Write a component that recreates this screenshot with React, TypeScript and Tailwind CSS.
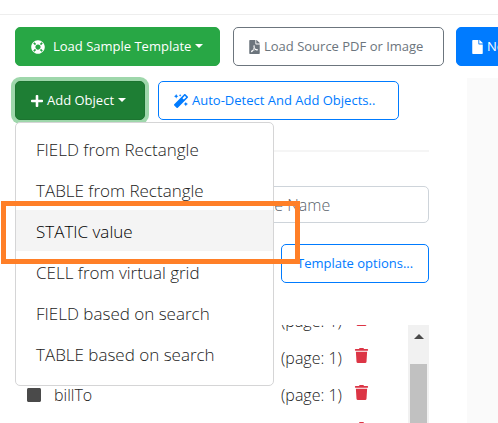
import type { ReactNode } from "react";
import { FaFile, FaFilePdf, FaLifeRing, FaMagic, FaPlus, FaSquare, FaTrash } from "react-icons/fa";
import clsx from "clsx";

const MENU_ITEMS = [
  "FIELD from Rectangle",
  "TABLE from Rectangle",
  "STATIC value",
  "CELL from virtual grid",
  "FIELD based on search",
  "TABLE based on search",
];

const OBJECTS = [
  { id: 1, name: "", page: 1 },
  { id: 2, name: "", page: 1 },
  { id: 3, name: "billTo", page: 1 },
  { id: 4, name: "", page: 1 },
];

function Button({ className, children }: { className: string; children: ReactNode }) {
  return (
    <button
      type="button"
      className={clsx(
        "flex h-[39px] shrink-0 items-center rounded-[5px] border px-[15px] text-[13px] whitespace-nowrap",
        className
      )}
    >
      {children}
    </button>
  );
}

function Caret() {
  return <span className="mb-0.5 ml-1 border-x-4 border-t-4 border-x-transparent border-t-white" />;
}

function AddObjectMenu() {
  return (
    <div className="relative shrink-0">
      <Button className="w-[130px] border-[#1c7430] bg-[#1e7e34] text-white ring-4 ring-[#28a745]/45">
        <FaPlus className="mr-1 h-3.5 w-3 shrink-0" />
        Add Object
        <Caret />
      </Button>
      <ul className="absolute top-full left-0 z-10 mt-[2px] w-[259px] rounded-[5px] border border-[#d5d5d6] bg-white pt-[5px] pb-[11px]">
        {MENU_ITEMS.map((item) => {
          const active = item === "STATIC value";
          return (
            <li key={item} className="relative">
              <a
                href="#"
                className={clsx(
                  "flex h-[41px] items-center px-5 pt-0.5 text-[17px] font-light",
                  active ? "bg-[#f4f4f4] text-black" : "text-[#222222]"
                )}
              >
                {item}
              </a>
              {active && (
                <span className="pointer-events-none absolute -top-[9px] -right-[27px] -bottom-[13px] -left-[15px] z-20 border-[5px] border-[#ff7f27]" />
              )}
            </li>
          );
        })}
      </ul>
    </div>
  );
}

function ObjectList() {
  return (
    <div className="mt-[42px] flex min-h-0 flex-1 overflow-hidden">
      <ul className="-mt-[23px] flex-1">
        {OBJECTS.map((object) => (
          <li key={object.id} className="flex h-[37px] items-center pl-[11px] text-base font-light text-[#222222]">
            <FaSquare size={16} className="mr-3 shrink-0 text-[#4a4a4a]" />
            <span className="flex-1">{object.name}</span>
            <span className="w-[73px]">(page: {object.page})</span>
            <button type="button" aria-label="Delete object" className="mr-[39px] pb-1 text-[#dc3545]">
              <FaTrash size={15} />
            </button>
          </li>
        ))}
      </ul>
      <div className="flex w-[21px] flex-col items-center bg-[#f1f1f1]">
        <span className="mt-[9px] border-x-[5px] border-b-[5px] border-x-transparent border-b-[#4a4a4a]" />
        <span className="mt-[25px] w-[17px] flex-1 bg-[#c1c1c1]" />
      </div>
    </div>
  );
}

export default function App() {
  return (
    <div className="flex h-screen flex-col overflow-hidden bg-white font-['Open_Sans',sans-serif] text-[#4a4a4a]">
      <header className="h-[15px] shrink-0 border-b border-[#eeeeee]" />

      <div className="flex shrink-0 py-3 pl-[15px]">
        <Button className="mr-[13px] w-[205px] border-[#28a745] bg-[#28a745] text-white">
          <FaLifeRing size={14} className="mr-2 shrink-0" />
          Load Sample Template
          <Caret />
        </Button>
        <Button className="mr-3 w-[211px] border-[#6c757d] bg-white text-[#6c757d]">
          <FaFilePdf className="mr-1 h-3.5 w-[11px] shrink-0" />
          Load Source PDF or Image
        </Button>
        <Button className="border-[#007bff] bg-[#007bff] text-white">
          <FaFile className="mr-1 h-3.5 w-[11px] shrink-0" />
          New Template
        </Button>
      </div>

      <div className="flex min-h-0 flex-1">
        <main className="flex min-w-0 flex-1 flex-col pt-[3px] pr-[38px] pl-[15px]">
          <div className="flex gap-[13px]">
            <AddObjectMenu />
            <Button className="w-[241px] border-[#007bff] bg-white text-[#007bff]">
              <FaMagic size={14} className="mr-1 shrink-0" />
              Auto-Detect And Add Objects..
            </Button>
          </div>

          <hr className="mt-[30px] border-t-2 border-[#f5f5f5]" />

          <div className="mt-[34px] flex pl-[190px]">
            <input
              type="text"
              aria-label="Template name"
              placeholder="Template Name"
              className="h-[37px] min-w-0 flex-1 rounded-[5px] border border-[#ced4da] px-2.5 text-base font-light placeholder:text-[#59626a]"
            />
          </div>

          <div className="mt-[21px] flex justify-end">
            <Button className="w-[148px] border-[#007bff] bg-white text-[#007bff]">Template options...</Button>
          </div>

          <ObjectList />
        </main>
        <aside className="w-[31px] shrink-0 bg-[#fafafa]" />
      </div>
    </div>
  );
}
